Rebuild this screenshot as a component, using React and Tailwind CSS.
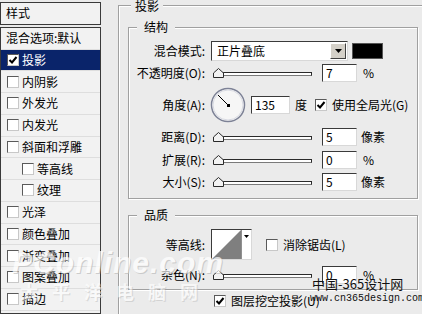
import React from 'react';

const FONT = "font-['Noto_Sans_CJK_SC',sans-serif]";

function Check({ checked }) {
  return (
    <span className="flex h-[12px] w-[12px] shrink-0 items-center justify-center border border-[#5a5a5a] border-b-[#c8c8c8] border-r-[#c8c8c8] bg-white">
      {checked && (
        <svg width="10" height="10" viewBox="0 0 10 10">
          <path d="M1.5 5 L4 7.5 L8.5 2" fill="none" stroke="#000" strokeWidth="2" />
        </svg>
      )}
    </span>
  );
}

function Slider() {
  return (
    <div className="relative ml-[8px] h-[10px] w-[99px]">
      <div className="absolute left-[3px] right-0 top-[4px] h-[4px] border border-[#2a2a2a] border-b-[#7a7a7a] bg-white" />
      <svg className="absolute left-0 top-0" width="11" height="10" viewBox="0 0 11 10">
        <polygon points="0.5,9.5 0.5,5 5.5,0.5 10.5,5 10.5,9.5" fill="#f2f2f2" stroke="#2a2a2a" />
      </svg>
    </div>
  );
}

function NumBox({ value, w = 'w-[35px]', ml = 'ml-[10px]' }) {
  return (
    <div className={`${ml} ${w} flex h-[18px] items-center border border-[#3a3a3a] border-b-[#d8d8d8] border-r-[#d8d8d8] bg-white pl-[3px] text-[12px] leading-none text-black`}>
      {value}
    </div>
  );
}

function Label({ children }) {
  return <div className="w-[76px] shrink-0 text-right text-[12px] leading-none text-black">{children}</div>;
}

const styles = [
  { t: '混合选项:默认', head: true },
  { t: '投影', checked: true, sel: true },
  { t: '内阴影' },
  { t: '外发光' },
  { t: '内发光' },
  { t: '斜面和浮雕' },
  { t: '等高线', indent: true },
  { t: '纹理', indent: true },
  { t: '光泽' },
  { t: '颜色叠加' },
  { t: '渐变叠加' },
  { t: '图案叠加' },
  { t: '描边' },
];

export default function App() {
  return (
    <div className={`${FONT} relative flex h-[314px] w-[422px] overflow-hidden bg-[#ebebeb] text-black`}>
      {/* left styles list */}
      <div className="flex w-[101px] shrink-0 flex-col pt-[2px]">
        <div className="flex h-[23px] items-center border border-[#3a3a3a] bg-[#f2f2f2] pl-[5px] text-[12px] leading-none">样式</div>
        <div className="mt-[2px] h-[290px] border border-[#3a3a3a] bg-[#f2f2f2]">
          {styles.map((s) => (
            <div
              key={s.t}
              className={`flex h-[21.75px] items-center border-b border-[#dedede] text-[12px] leading-none ${
                s.sel ? 'bg-[#0a246a] text-white' : ''
              } ${s.head ? 'pl-[5px]' : s.indent ? 'pl-[21px]' : 'pl-[6px]'}`}
            >
              {!s.head && <Check checked={s.checked} />}
              <span className={s.head ? '' : 'ml-[3px]'}>{s.t}</span>
            </div>
          ))}
        </div>
      </div>

      {/* right settings */}
      <div className="pl-[17px] pt-[5px]">
        <div className="relative h-[330px] w-[330px] border-l border-t border-[#a0a0a0] pl-[9px] pt-[21px] shadow-[inset_1px_1px_0_#fff]">
          <span className="absolute left-[12px] top-[-7px] bg-[#ebebeb] px-[4px] text-[12px] leading-[14px]">投影</span>

          {/* structure */}
          <div className="relative h-[172px] w-[290px] border border-[#a0a0a0] shadow-[inset_1px_1px_0_#fff,1px_1px_0_#fff]">
            <span className="absolute left-[8px] top-[-8px] bg-[#ebebeb] px-[7px] text-[12px] leading-[14px]">结构</span>

            <div className="mt-[13px] flex h-[20px] items-center">
              <Label>混合模式:</Label>
              <div className="ml-[6px] flex h-[20px] w-[137px] items-center justify-between border border-[#3a3a3a] border-b-[#d8d8d8] border-r-[#d8d8d8] bg-white pl-[5px] pr-[1px] text-[12px] leading-none">
                <span>正片叠底</span>
                <span className="flex h-[16px] w-[16px] items-center justify-center border border-[#fff] border-b-[#404040] border-r-[#404040] bg-[#d4d0c8]">
                  <svg width="7" height="4" viewBox="0 0 7 4">
                    <polygon points="0,0 7,0 3.5,4" fill="#000" />
                  </svg>
                </span>
              </div>
              <div className="ml-[4px] h-[16px] w-[31px] border border-[#555] bg-black" />
            </div>

            <div className="mt-[3px] flex h-[18px] items-center">
              <Label>不透明度(O):</Label>
              <Slider />
              <NumBox value="7" />
              <span className="ml-[6px] text-[12px] leading-none">%</span>
            </div>

            <div className="mt-[5px] flex h-[35px] items-center">
              <Label>角度(A):</Label>
              <svg className="ml-[5px]" width="36" height="36" viewBox="0 0 36 36">
                <circle cx="18" cy="18" r="16.5" fill="#f6f6f6" stroke="#7d8296" strokeWidth="1.5" />
                <circle cx="18" cy="18" r="15" fill="none" stroke="#d8dae2" strokeWidth="1" />
                <line x1="18" y1="18" x2="8" y2="8" stroke="#000" strokeWidth="1" />
                <rect x="17" y="17" width="3" height="3" fill="#000" />
              </svg>
              <NumBox value="135" w="w-[39px]" ml="ml-[5px]" />
              <span className="ml-[5px] text-[12px] leading-none">度</span>
              <span className="ml-[8px]"><Check checked /></span>
              <span className="ml-[5px] text-[12px] leading-none">使用全局光(G)</span>
            </div>

            <div className="mt-[6px] flex h-[18px] items-center">
              <Label>距离(D):</Label>
              <Slider />
              <NumBox value="5" />
              <span className="ml-[4px] text-[12px] leading-none">像素</span>
            </div>

            <div className="mt-[5px] flex h-[18px] items-center">
              <Label>扩展(R):</Label>
              <Slider />
              <NumBox value="0" />
              <span className="ml-[6px] text-[12px] leading-none">%</span>
            </div>

            <div className="mt-[4px] flex h-[18px] items-center">
              <Label>大小(S):</Label>
              <Slider />
              <NumBox value="5" />
              <span className="ml-[4px] text-[12px] leading-none">像素</span>
            </div>
          </div>

          {/* quality */}
          <div className="relative mt-[16px] h-[75px] w-[290px] border border-[#a0a0a0] shadow-[inset_1px_1px_0_#fff,1px_1px_0_#fff]">
            <span className="absolute left-[8px] top-[-8px] bg-[#ebebeb] px-[7px] text-[12px] leading-[14px]">品质</span>

            <div className="mt-[13px] flex h-[31px] items-center">
              <Label>等高线:</Label>
              <div className="ml-[6px] flex h-[31px] w-[41px] border border-[#3a3a3a] border-b-[#d8d8d8] border-r-[#d8d8d8] bg-white">
                <svg width="29" height="29" viewBox="0 0 29 29">
                  <polygon points="0,29 29,0 29,29" fill="#7f7f7f" />
                </svg>
                <div className="flex flex-1 items-start justify-center border-l border-[#909090] pt-[5px]">
                  <svg width="5" height="3" viewBox="0 0 5 3">
                    <polygon points="0,0 5,0 2.5,3" fill="#000" />
                  </svg>
                </div>
              </div>
              <span className="ml-[14px]"><Check /></span>
              <span className="ml-[5px] text-[12px] leading-none">消除锯齿(L)</span>
            </div>

            <div className="mt-[6px] flex h-[18px] items-center">
              <Label>杂色(N):</Label>
              <Slider />
              <NumBox value="0" />
              <span className="ml-[6px] text-[12px] leading-none">%</span>
            </div>
          </div>

          <div className="ml-[86px] mt-[4px] flex h-[13px] items-center">
            <Check checked />
            <span className="ml-[5px] text-[12px] leading-none">图层挖空投影(U)</span>
          </div>
        </div>
      </div>

      {/* watermarks */}
      <div className="pointer-events-none absolute left-[12px] top-[248px] font-['Liberation_Sans',sans-serif] text-[30px] font-bold italic leading-none tracking-[1px] text-white opacity-70 [text-shadow:1px_1px_0_#bdbdbd]">
        PConline.com
      </div>
      <div className="pointer-events-none absolute left-[20px] top-[282px] text-[18px] font-bold leading-none tracking-[14px] text-white opacity-60 [text-shadow:1px_1px_0_#c4c4c4]">
        太平洋电脑网
      </div>
      <div className="pointer-events-none absolute left-[312px] top-[277px] text-[13px] leading-none text-[#111]">
        中国-365设计网
      </div>
      <div className="pointer-events-none absolute left-[310px] top-[294px] font-['Liberation_Mono',monospace] text-[10px] leading-none text-[#111]">
        www.cn365design.com
      </div>
    </div>
  );
}
